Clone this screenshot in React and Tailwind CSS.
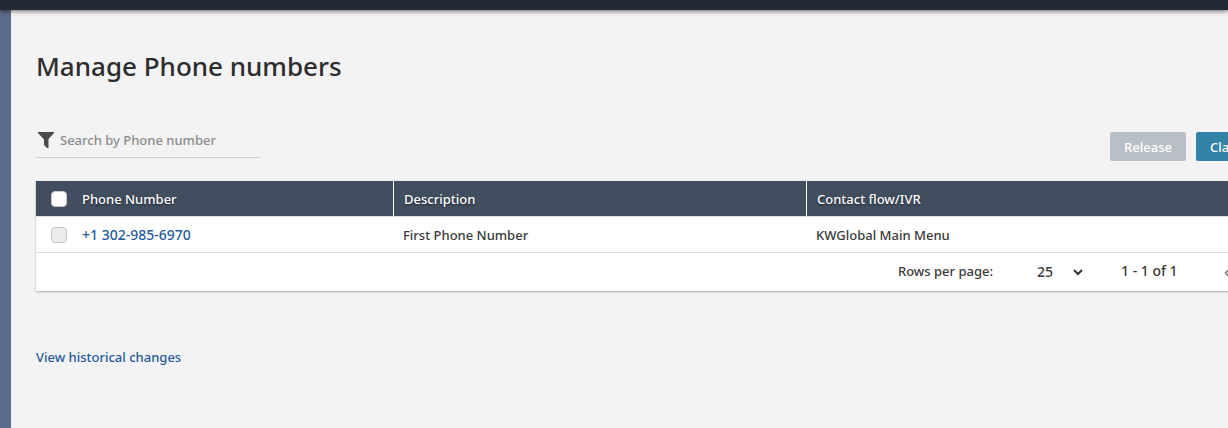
import { useState } from "react";

const numbers = [
  { phone: "+1 302-985-6970", description: "First Phone Number", flow: "KWGlobal Main Menu" },
];

function FilterIcon() {
  return (
    <svg className="h-4 w-4 shrink-0 fill-[#4a4a4a]" viewBox="0 0 16 16" aria-hidden="true">
      <path d="M0 0h16v1L10.5 7v9H9L6 13V7.5L0 1z" />
    </svg>
  );
}

function ChevronDown() {
  return (
    <svg className="pointer-events-none col-start-1 row-start-1 h-2 w-2.5 justify-self-end fill-none stroke-[#333] stroke-2" viewBox="0 0 10 8" aria-hidden="true">
      <path d="M1 2l4 4 4-4" />
    </svg>
  );
}

function ChevronLeft() {
  return (
    <svg className="h-2.5 w-2 fill-none stroke-[#777] stroke-[1.5]" viewBox="0 0 8 10" aria-hidden="true">
      <path d="M5.5 1l-4 4 4 4" />
    </svg>
  );
}

function Toolbar() {
  const [query, setQuery] = useState("");
  return (
    <div className="flex items-start justify-between pt-9">
      <label className="flex h-9 w-56 items-center gap-1.5 border-b border-[#cfcfcf] pl-0.5">
        <FilterIcon />
        <input
          type="text"
          aria-label="Search by Phone number"
          placeholder="Search by Phone number"
          value={query}
          onChange={(e) => setQuery(e.target.value)}
          className="w-full min-w-0 bg-transparent leading-5 outline-none placeholder:text-[#8c8c8c]"
        />
      </label>
      <div className="flex gap-2.5 pt-2.5 text-white [text-shadow:0_1px_2px_rgba(0,0,0,0.5)]">
        <button type="button" disabled className="h-[29px] w-[76px] rounded-xs bg-[#b9bfc6]">
          Release
        </button>
        <button type="button" className="h-[29px] w-[132px] rounded-xs bg-[#3282a6] px-3.5 text-left">
          Claim a number
        </button>
      </div>
    </div>
  );
}

function NumbersTable() {
  return (
    <table className="w-full table-fixed border-separate border-spacing-0 text-left [&_td]:border-b [&_td]:border-b-[#dedede] [&_th]:border-b [&_th]:border-b-[#dedede] [&_th]:font-medium">
      <colgroup>
        <col className="w-[46px]" />
        <col className="w-[311px]" />
        <col className="w-[413px]" />
        <col />
      </colgroup>
      <thead>
        <tr className="h-9 text-white [text-shadow:0_1px_2px_rgba(0,0,0,0.6)] [&>th]:bg-[#414e60]">
          <th className="pl-[15px]">
            <input type="checkbox" aria-label="Select all numbers" className="block h-4 w-4 appearance-none rounded border border-[#c8c8c8] bg-white" />
          </th>
          <th>Phone Number</th>
          <th className="border-l border-l-white pl-2.5">Description</th>
          <th className="border-l border-l-white pl-2.5">Contact flow/IVR</th>
        </tr>
      </thead>
      <tbody>
        {numbers.map((n) => (
          <tr key={n.phone} className="h-9">
            <td className="pl-[15px]">
              <input type="checkbox" aria-label={n.phone} className="block h-4 w-4 appearance-none rounded border border-[#c4c4c4] bg-[#ebebeb]" />
            </td>
            <td>
              <a href="#number" className="text-sm text-[#1f5a9a]">{n.phone}</a>
            </td>
            <td className="pl-2.5">{n.description}</td>
            <td className="pl-2.5">{n.flow}</td>
          </tr>
        ))}
      </tbody>
    </table>
  );
}

function Pager() {
  return (
    <div className="flex h-[38px] items-center justify-end pr-24 pb-0.5">
      <label htmlFor="rows">Rows per page:</label>
      <div className="ml-11 grid w-[46px] items-center pt-0.5">
        <select id="rows" defaultValue="25" className="col-start-1 row-start-1 w-full appearance-none bg-transparent text-sm outline-none">
          <option>25</option>
          <option>50</option>
          <option>100</option>
        </select>
        <ChevronDown />
      </div>
      <span className="ml-[38px] w-[103px] text-sm">1 - 1 of 1</span>
      <button type="button" aria-label="Previous page" className="pt-1">
        <ChevronLeft />
      </button>
    </div>
  );
}

export default function App() {
  return (
    <div className="flex min-h-screen flex-col overflow-x-hidden bg-[#f3f3f3] font-['Noto_Sans','Open_Sans',sans-serif] text-[13px] leading-5 font-medium text-[#3a3a3a]">
      <header className="z-10 h-2.5 bg-[#232a34] shadow-[0_1px_5px_rgba(0,0,0,0.6)]" />
      <div className="flex grow">
        <aside className="w-[11px] shrink-0 bg-[#5b6c8a]" />
        <main className="-mr-[100px] min-w-0 grow pt-9 pl-[25px]">
          <h1 className="text-[26px] leading-10 text-[#2d2d2d]">Manage Phone numbers</h1>
          <Toolbar />
          <section className="mt-5 bg-white shadow-[0_1px_2px_rgba(0,0,0,0.3)]">
            <NumbersTable />
            <Pager />
          </section>
          <a href="#history" className="mt-14 inline-block text-[#1f5a9a]">
            View historical changes
          </a>
        </main>
      </div>
    </div>
  );
}
